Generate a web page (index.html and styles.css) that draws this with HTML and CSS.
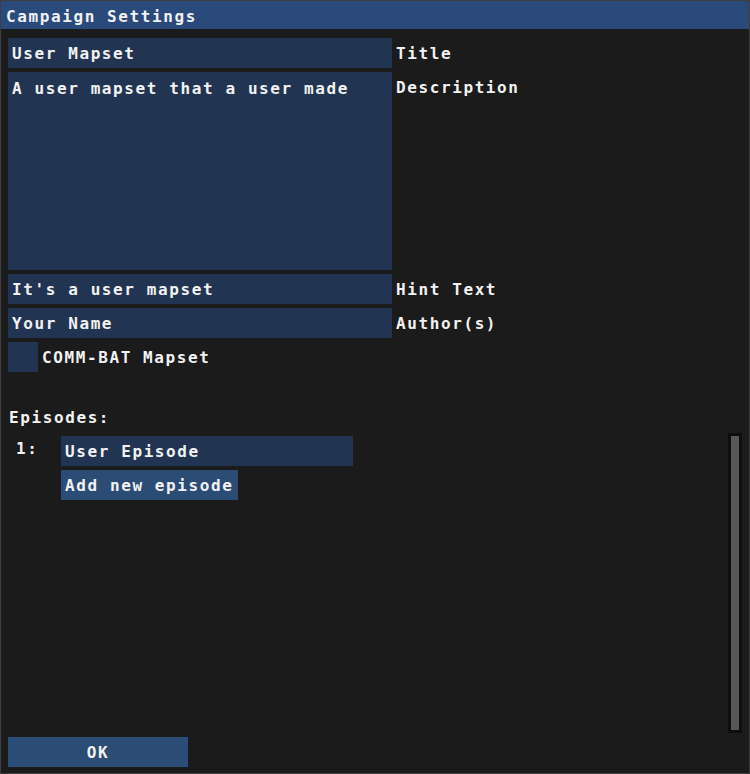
FILE: index.html
```html
<!DOCTYPE html>
<html lang="en">
<head>
  <meta charset="UTF-8">
  <title>Campaign Settings</title>
  <link rel="stylesheet" href="styles.css">
</head>
<body>

  <div class="window">
    <div class="title-bar">Campaign Settings</div>

    <div class="content">
      <div class="field-row">
        <div class="input">User Mapset</div>
        <span class="label">Title</span>
      </div>
      <div class="field-row">
        <div class="input multiline">A user mapset that a user made</div>
        <span class="label">Description</span>
      </div>
      <div class="field-row">
        <div class="input">It's a user mapset</div>
        <span class="label">Hint Text</span>
      </div>
      <div class="field-row">
        <div class="input">Your Name</div>
        <span class="label">Author(s)</span>
      </div>
      <div class="check-row">
        <div class="checkbox"></div>
        <span class="label">COMM-BAT Mapset</span>
      </div>

      <div class="episodes-title">Episodes:</div>

      <!-- Episode list child region -->
      <div class="episodes">
        <div class="episode-list">
          <div class="episode-row">
            <span class="episode-num">1:</span>
            <div class="input episode-input">User Episode</div>
          </div>
          <div class="episode-row">
            <span class="episode-num"></span>
            <button class="btn">Add new episode</button>
          </div>
        </div>
        <div class="scrollbar"><div class="thumb"></div></div>
      </div>

      <button class="btn ok-btn">OK</button>
    </div>
  </div>

</body>
</html>
```

FILE: styles.css
```css
body {
  margin: 0;
  background-color: #1b1b1b;
  font-family: 'DejaVu Sans Mono', 'Liberation Mono', monospace;
  font-weight: bold;
  font-size: 16px;
  letter-spacing: 1.6px;
  color: #f2f2f2;
}

.window {
  width: 750px;
  height: 774px;
  box-sizing: border-box;
  border: 1px solid #3f3f3f;
  background-color: #1b1b1b;
  display: flex;
  flex-direction: column;
}

.title-bar {
  height: 28px;
  line-height: 32px;
  padding-left: 5px;
  background-color: #294a7a;
}

.content {
  flex: 1;
  padding: 9px 7px 7px 7px;
  display: flex;
  flex-direction: column;
  gap: 4px;
}

.field-row {
  display: flex;
  gap: 4px;
}

.input {
  width: 384px;
  height: 30px;
  line-height: 28px;
  padding: 2px 4px 0 4px;
  box-sizing: border-box;
  background-color: #213553;
  white-space: pre;
}

.input.multiline {
  height: 198px;
  line-height: 30px;
}

.label {
  line-height: 28px;
  padding-top: 2px;
}

.check-row {
  display: flex;
  gap: 4px;
  align-items: center;
}

.checkbox {
  width: 30px;
  height: 30px;
  background-color: #213553;
}

.episodes-title {
  margin-top: 31px;
  padding-left: 1px;
  line-height: 22px;
}

.episodes {
  display: flex;
  height: 300px;
  padding-left: 8px;
}

.episode-list {
  flex: 1;
  padding-top: 3px;
  display: flex;
  flex-direction: column;
  gap: 4px;
}

.episode-row {
  display: flex;
  align-items: center;
}

.episode-num {
  width: 45px;
  line-height: 30px;
  align-self: flex-start;
  margin-top: -2px;
}

.episode-input {
  width: 292px;
}

.btn {
  height: 30px;
  padding: 1px 4px 0 4px;
  border: none;
  background-color: #2b4c75;
  color: #f2f2f2;
  font: inherit;
  letter-spacing: inherit;
}

.scrollbar {
  width: 14px;
  background-color: #0e0e0e;
  padding: 3px;
  box-sizing: border-box;
}

.thumb {
  height: 100%;
  background-color: #575757;
}

.ok-btn {
  width: 180px;
}
```
